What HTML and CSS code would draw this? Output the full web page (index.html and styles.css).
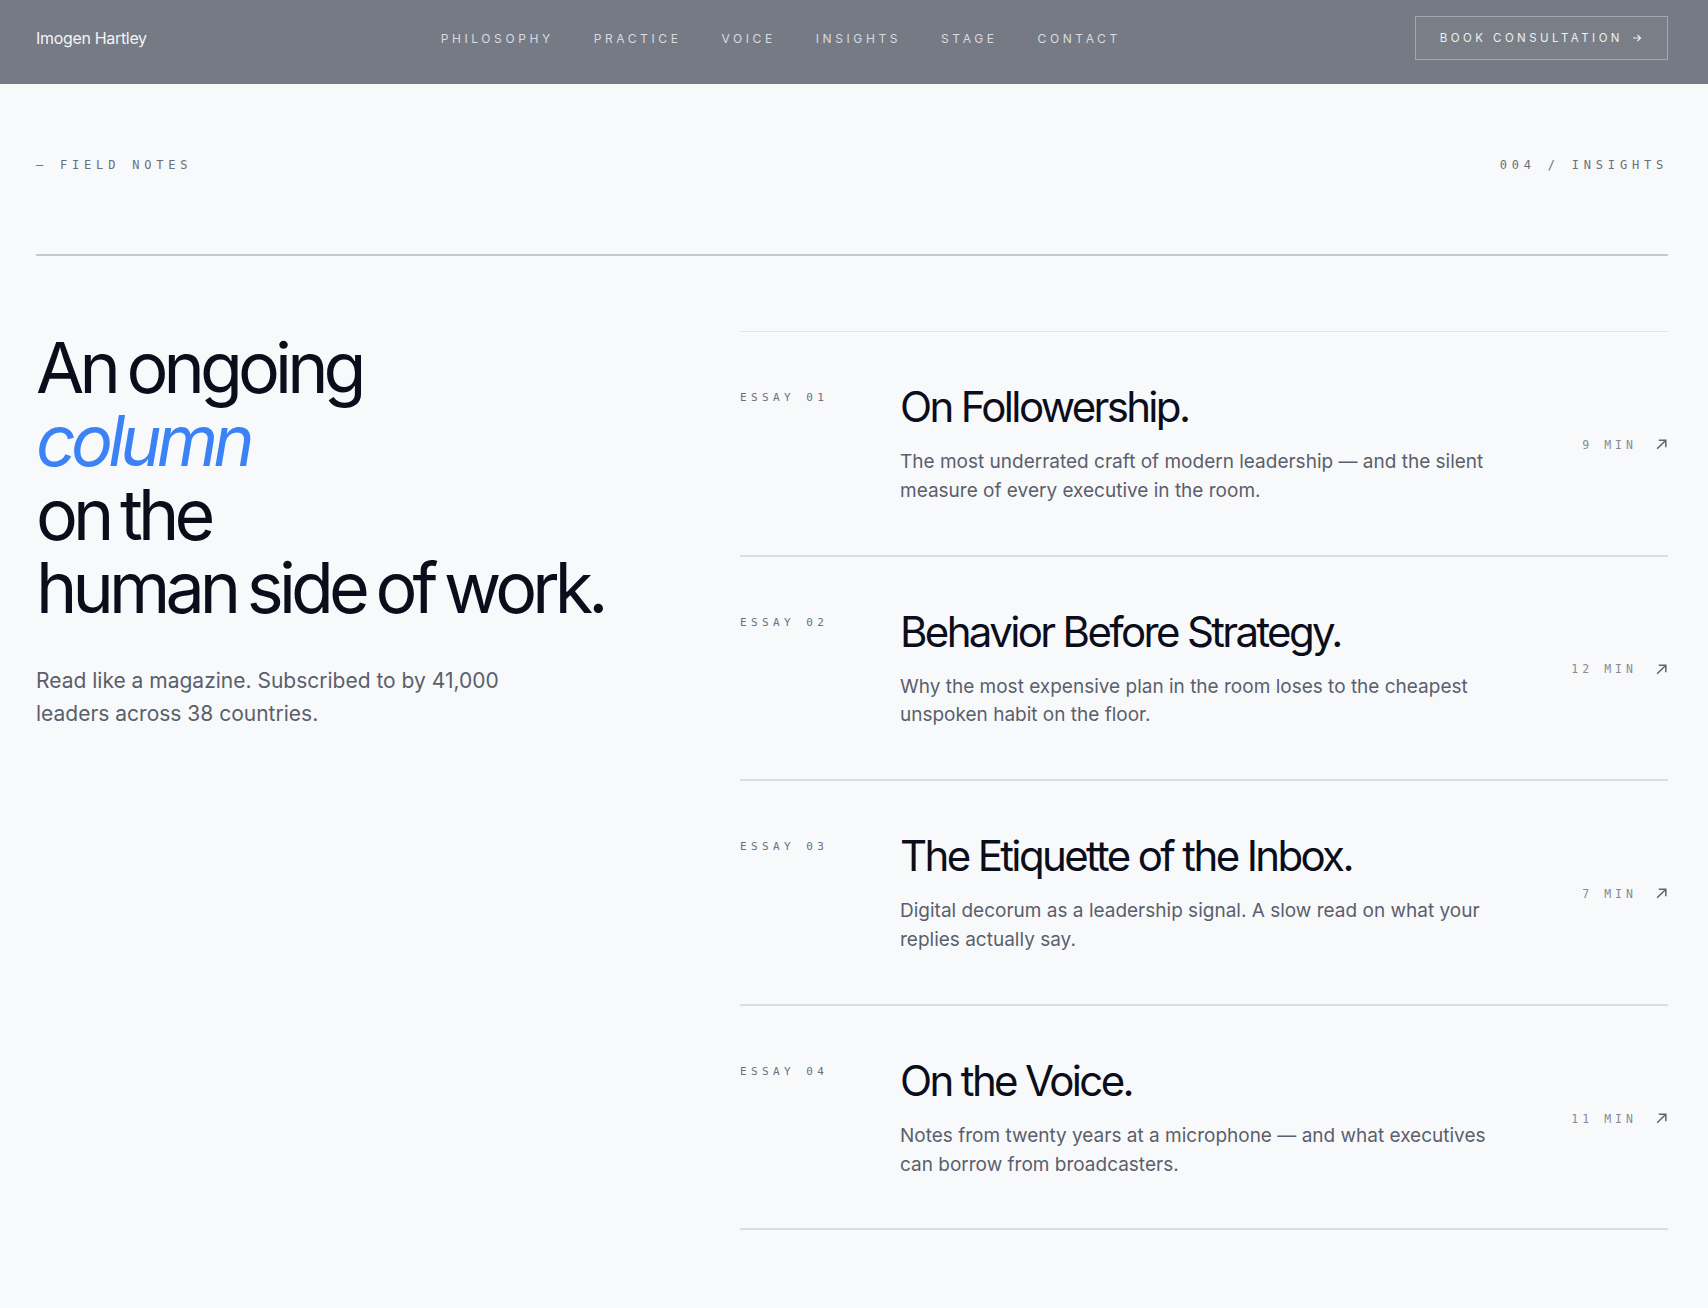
FILE: index.html
```html
<!DOCTYPE html>
<html lang="en">
<head>
<meta charset="utf-8">
<title>Insights — Imogen Hartley</title>
<link rel="stylesheet" href="styles.css">
</head>
<body>
<header class="site-header">
  <a class="brand" href="#">Imogen Hartley</a>
  <nav class="main-nav">
    <a href="#">Philosophy</a>
    <a href="#">Practice</a>
    <a href="#">Voice</a>
    <a href="#">Insights</a>
    <a href="#">Stage</a>
    <a href="#">Contact</a>
  </nav>
  <a class="cta" href="#">Book Consultation
    <svg class="cta-arrow" viewBox="0 0 10 10" aria-hidden="true"><path d="M1 5h7.5M5.5 2l3 3-3 3"/></svg>
  </a>
</header>

<main class="page">
  <div class="section-bar">
    <span class="eyebrow">— Field Notes</span>
    <span class="eyebrow">004 / Insights</span>
  </div>
  <hr class="section-rule">

  <section class="insights">
    <div class="intro">
      <h1 class="intro-title">An ongoing<br><em>column</em><br>on the<br>human side of work.</h1>
      <p class="intro-lead">Read like a magazine. Subscribed to by 41,000 leaders across 38 countries.</p>
    </div>

    <ol class="essays">
      <li class="essay">
        <span class="essay-num">Essay 01</span>
        <div class="essay-body">
          <h2 class="essay-title">On Followership.</h2>
          <p class="essay-desc">The most underrated craft of modern leadership — and the silent measure of every executive in the room.</p>
        </div>
        <a class="essay-meta" href="#"><span class="read-time">9 min</span>
          <svg class="go" viewBox="0 0 12 12" aria-hidden="true"><path d="M2 10L10 2M3.5 2H10v6.5"/></svg></a>
      </li>
      <li class="essay">
        <span class="essay-num">Essay 02</span>
        <div class="essay-body">
          <h2 class="essay-title">Behavior Before Strategy.</h2>
          <p class="essay-desc">Why the most expensive plan in the room loses to the cheapest unspoken habit on the floor.</p>
        </div>
        <a class="essay-meta" href="#"><span class="read-time">12 min</span>
          <svg class="go" viewBox="0 0 12 12" aria-hidden="true"><path d="M2 10L10 2M3.5 2H10v6.5"/></svg></a>
      </li>
      <li class="essay">
        <span class="essay-num">Essay 03</span>
        <div class="essay-body">
          <h2 class="essay-title">The Etiquette of the Inbox.</h2>
          <p class="essay-desc">Digital decorum as a leadership signal. A slow read on what your replies actually say.</p>
        </div>
        <a class="essay-meta" href="#"><span class="read-time">7 min</span>
          <svg class="go" viewBox="0 0 12 12" aria-hidden="true"><path d="M2 10L10 2M3.5 2H10v6.5"/></svg></a>
      </li>
      <li class="essay">
        <span class="essay-num">Essay 04</span>
        <div class="essay-body">
          <h2 class="essay-title">On the Voice.</h2>
          <p class="essay-desc">Notes from twenty years at a microphone — and what executives can borrow from broadcasters.</p>
        </div>
        <a class="essay-meta" href="#"><span class="read-time">11 min</span>
          <svg class="go" viewBox="0 0 12 12" aria-hidden="true"><path d="M2 10L10 2M3.5 2H10v6.5"/></svg></a>
      </li>
    </ol>
  </section>
</main>
</body>
</html>
```

FILE: styles.css
```css
* {
  box-sizing: border-box;
}

html, body {
  margin: 0;
  padding: 0;
}

body {
  background: #f8f9fb;
  color: #0b0e1a;
  font-family: Inter, "Noto Sans", "Liberation Sans", sans-serif;
  -webkit-font-smoothing: antialiased;
}

a {
  color: inherit;
  text-decoration: none;
}

/* ---------- top bar ---------- */

.site-header {
  height: 84px;
  padding: 0 40px 8px 36px;
  background: #767a84;
  display: flex;
  align-items: center;
  justify-content: space-between;
}

.brand {
  color: #f3f4f6;
  font-size: 16px;
  letter-spacing: -0.02em;
}

.main-nav {
  display: flex;
  gap: 40px;
}

.main-nav a {
  color: #d9dbe0;
  font-size: 12px;
  letter-spacing: 0.3em;
  text-transform: uppercase;
}

.cta {
  height: 44px;
  padding: 0 25px 0 24px;
  border: 1px solid rgba(255, 255, 255, 0.32);
  background: rgba(255, 255, 255, 0.03);
  display: flex;
  align-items: center;
  gap: 9px;
  color: #eceef1;
  font-size: 11.5px;
  letter-spacing: 0.3em;
  text-transform: uppercase;
}

.cta-arrow {
  width: 10px;
  height: 10px;
  fill: none;
  stroke: #eceef1;
  stroke-width: 1.2;
}

/* ---------- page ---------- */

.page {
  padding: 72px 40px 78px 36px;
}

.section-bar {
  display: flex;
  justify-content: space-between;
  line-height: 18px;
}

.eyebrow {
  font-family: "DejaVu Sans Mono", "Liberation Mono", monospace;
  font-size: 12px;
  letter-spacing: 0.4em;
  text-transform: uppercase;
  color: #6c6f79;
}

.section-rule {
  margin: 80px 0 0;
  border: 0;
  height: 2px;
  background: #c6c8cd;
}

.insights {
  margin-top: 75px;
  display: grid;
  grid-template-columns: 640px 1fr;
  column-gap: 64px;
  align-items: start;
}

/* ---------- intro column ---------- */

.intro-title {
  margin: 0;
  font-size: 70px;
  font-weight: 400;
  line-height: 73.4px;
  letter-spacing: -0.07em;
  word-spacing: -0.06em;
  color: #0b0e1a;
}

.intro-title em {
  color: #3b82f6;
  font-style: italic;
}

.intro-lead {
  margin: 39px 0 0;
  max-width: 480px;
  font-size: 21px;
  line-height: 33px;
  color: #5b5f6b;
}

/* ---------- essay list ---------- */

.essays {
  list-style: none;
  margin: 0;
  padding: 0;
  border-top: 1px solid #e2e4e8;
}

.essay {
  display: grid;
  grid-template-columns: 160px 1fr auto;
  align-items: center;
  padding: 52px 0 49px;
  border-bottom: 2px solid #dadce0;
}

.essay-num {
  align-self: start;
  padding-top: 6px;
  font-family: "DejaVu Sans Mono", "Liberation Mono", monospace;
  font-size: 11px;
  line-height: 16px;
  letter-spacing: 0.4em;
  text-transform: uppercase;
  color: #6c6f79;
}

.essay-title {
  margin: 0;
  font-size: 42px;
  font-weight: 400;
  line-height: 46px;
  letter-spacing: -0.063em;
  color: #0b0e1a;
}

.essay-desc {
  margin: 18px 0 0;
  max-width: 600px;
  font-size: 19px;
  line-height: 28.8px;
  color: #5b5f6b;
}

.essay-meta {
  display: flex;
  align-items: center;
  gap: 18px;
}

.read-time {
  font-family: "DejaVu Sans Mono", "Liberation Mono", monospace;
  font-size: 11.5px;
  letter-spacing: 0.35em;
  text-transform: uppercase;
  color: #878a93;
}

.go {
  width: 13px;
  height: 13px;
  fill: none;
  stroke: #61646e;
  stroke-width: 1.4;
}
```
